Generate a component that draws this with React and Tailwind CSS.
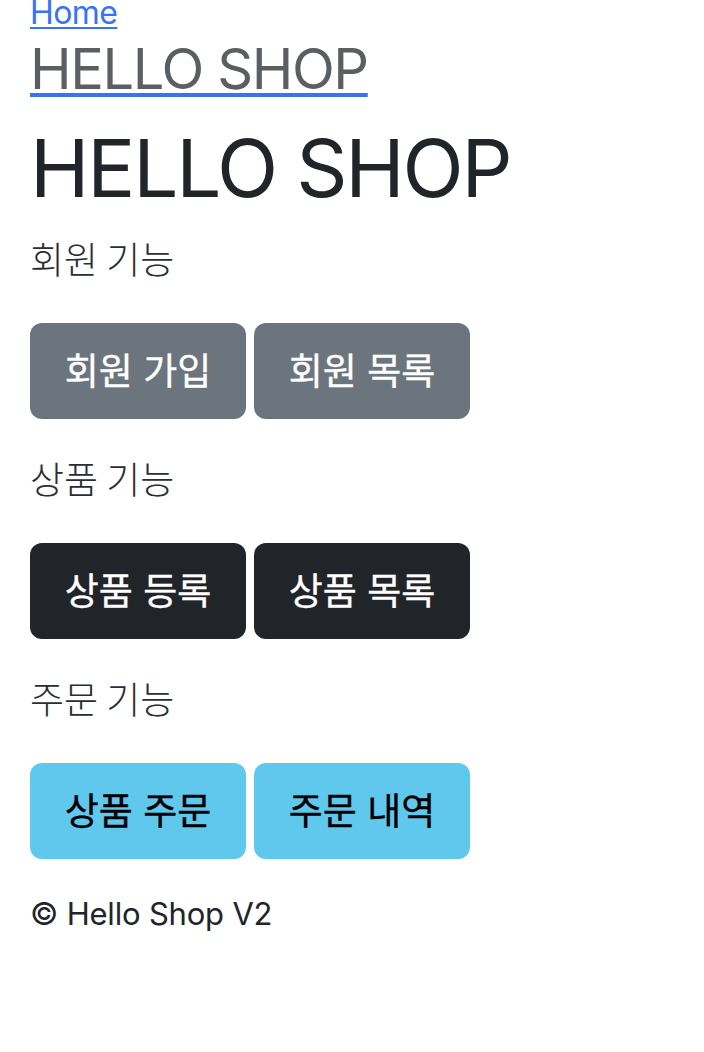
export default function App() {
  const btn = "w-[216px] h-[96px] rounded-[12px] flex items-center justify-center text-[37px] font-normal leading-none [-webkit-text-stroke:0.35px_currentColor]";
  return (
    <div className="min-h-[1052px] bg-white px-[30px] text-[#212529] font-['Inter','Noto_Sans_CJK_KR',sans-serif]">
      <div className="leading-[25px] text-[32px] tracking-[-0.6px]">
        <a href="#" className="text-[#3a72f6] underline decoration-[2px] underline-offset-[3px]">Home</a>
      </div>
      <div className="leading-[89px] text-[56px] tracking-[-1.4px]">
        <a href="#" className="underline decoration-[#3a72f6] decoration-[4px] underline-offset-[4px]">
          <span className="text-[#5c5f62]">HELLO SHOP</span>
        </a>
      </div>
      <h1 className="leading-[108px] text-[80px] font-normal tracking-[-2.2px]">HELLO SHOP</h1>

      <Section title="회원 기능" className="mt-[8px]">
        <button className={`${btn} bg-[#6c757d] text-white`}>회원 가입</button>
        <button className={`${btn} bg-[#6c757d] text-white`}>회원 목록</button>
      </Section>
      <Section title="상품 기능" className="mt-[31px]">
        <button className={`${btn} bg-[#212529] text-white`}>상품 등록</button>
        <button className={`${btn} bg-[#212529] text-white`}>상품 목록</button>
      </Section>
      <Section title="주문 기능" className="mt-[31px]">
        <button className={`${btn} bg-[#5fc8ec] text-black`}>상품 주문</button>
        <button className={`${btn} bg-[#5fc8ec] text-black`}>주문 내역</button>
      </Section>

      <div className="mt-[32px] text-[31px] leading-[46px] tracking-[-0.2px]">© Hello Shop V2</div>
    </div>
  );
}

function Section({ title, className, children }) {
  return (
    <div className={className}>
      <div className="text-[37px] font-light leading-[56px] text-[#2a2e33] font-['Noto_Sans_CJK_KR',sans-serif]">{title}</div>
      <div className="mt-[37px] flex gap-2">{children}</div>
    </div>
  );
}
